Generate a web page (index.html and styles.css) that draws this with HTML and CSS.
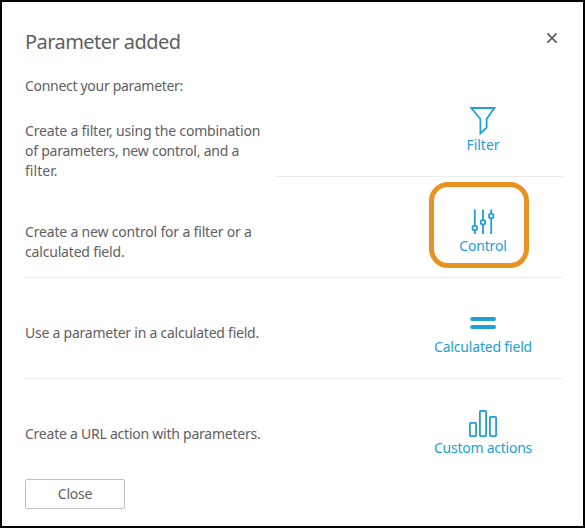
FILE: index.html
```html
<!DOCTYPE html>
<html lang="en">
<head>
<meta charset="utf-8">
<title>Parameter added</title>
<link rel="stylesheet" href="styles.css">
</head>
<body>
<main class="dialog">
  <header class="header">
    <h1 class="title">Parameter added</h1>
    <button class="dismiss" aria-label="Dismiss">
      <svg width="12" height="12" viewBox="0 0 12 12"><path d="M1.4 1.4 10.6 10.6M10.6 1.4 1.4 10.6"/></svg>
    </button>
  </header>
  <p class="intro">Connect your parameter:</p>
  <section class="row row-filter">
    <p class="text"><span class="snug">Create a filter, using the combination</span><br><span class="tight">of parameters, new control, and a</span><br><span class="loose">filter.</span></p>
    <a class="action">
      <svg class="icon" width="30" height="30" viewBox="0 0 30 30"><path d="M3.2 3H26.4L18.6 14V22.6L12.4 28.4V14Z"/></svg>
      <span class="label">Filter</span>
    </a>
  </section>
  <section class="row">
    <p class="text"><span class="snug">Create a new control for a filter or a</span><br><span class="snug">calculated field.</span></p>
    <a class="action highlighted">
      <svg class="icon" width="30" height="30" viewBox="0 0 30 30"><path d="M6.8 3.5V19.4M6.8 24.4V28M15 3.5V13.8M15 18.8V28M23.2 3.5V7.4M23.2 12.4V28"/><circle cx="6.8" cy="21.9" r="2.3"/><circle cx="15" cy="16.3" r="2.3"/><circle cx="23.2" cy="9.9" r="2.3"/></svg>
      <span class="label snug">Control</span>
    </a>
  </section>
  <section class="row">
    <p class="text"><span class="tight">Use a parameter in a calculated field.</span></p>
    <a class="action">
      <svg class="icon equals" width="30" height="30" viewBox="0 0 30 30"><path d="M4.2 12H26M4.2 20H26"/></svg>
      <span class="label snug">Calculated field</span>
    </a>
  </section>
  <section class="row row-last">
    <p class="text"><span class="tight">Create a URL action with parameters.</span></p>
    <a class="action">
      <svg class="icon" width="30" height="30" viewBox="0 0 30 30"><rect x="1.9" y="14.9" width="6.2" height="13.2" rx=".8"/><rect x="11.9" y="2.9" width="6.2" height="25.2" rx=".8"/><rect x="21.9" y="8.9" width="6.2" height="19.2" rx=".8"/></svg>
      <span class="label tight">Custom actions</span>
    </a>
  </section>
  <button class="close">Close</button>
</main>
</body>
</html>
```
FILE: styles.css
```css
*, *::before { box-sizing: border-box; }
body {
  margin: 0;
  font: 14px/20px "Noto Sans", "Open Sans", sans-serif;
  color: #5f6062;
}
.dialog {
  width: 585px;
  height: 528px;
  padding: 24px 20px 0 23px;
  border: 2px solid #000;
  background: #fff;
  overflow: hidden;
}
.header {
  display: flex;
  justify-content: space-between;
  height: 50px;
}
.title {
  margin: 0;
  font-size: 20px;
  line-height: 32px;
  font-weight: 400;
  letter-spacing: -.55px;
  white-space: nowrap;
}
.dismiss {
  display: flex;
  width: 12px;
  height: 12px;
  margin: 6px 5px 0 0;
  padding: 0;
  border: 0;
  background: none;
}
.dismiss path {
  fill: none;
  stroke: #5f6062;
  stroke-width: 1.8;
}
.intro {
  margin: 0;
  letter-spacing: -.3px;
  white-space: nowrap;
}
.row {
  display: flex;
  justify-content: space-between;
  height: 101px;
  border-bottom: 1px solid #eaeded;
}
.row-filter {
  height: 81px;
  border: 0;
}
.row-last { border: 0; }
.text {
  margin: 45px 0 0;
  white-space: nowrap;
}
.row-filter .text { margin-top: 25px; }
.snug { letter-spacing: -.18px; }
.tight { letter-spacing: -.24px; }
.loose { letter-spacing: .05px; }
.action {
  position: relative;
  display: flex;
  flex-direction: column;
  align-items: center;
  width: 160px;
  padding-top: 29px;
  color: #219fd7;
}
.row-filter .action {
  width: 288px;
  padding: 9px 0 0 128px;
  border-bottom: 1px solid #eaeded;
}
.icon {
  display: block;
  flex: none;
  fill: none;
  stroke: #219fd7;
  stroke-width: 1.8;
}
.equals {
  stroke-width: 4;
  stroke-linecap: round;
}
.label { white-space: nowrap; }
.highlighted::before {
  content: "";
  position: absolute;
  left: 26px;
  top: 5px;
  width: 100px;
  height: 86px;
  border: 5px solid #e8921f;
  border-radius: 19px;
}
.close {
  display: block;
  width: 100px;
  height: 30px;
  margin-top: -1px;
  padding: 0;
  border: 1px solid #bfc0c1;
  border-radius: 2px;
  background: #fff;
  color: #5f6062;
  font: 14px/20px "Noto Sans", "Open Sans", sans-serif;
  letter-spacing: -.25px;
}
```
